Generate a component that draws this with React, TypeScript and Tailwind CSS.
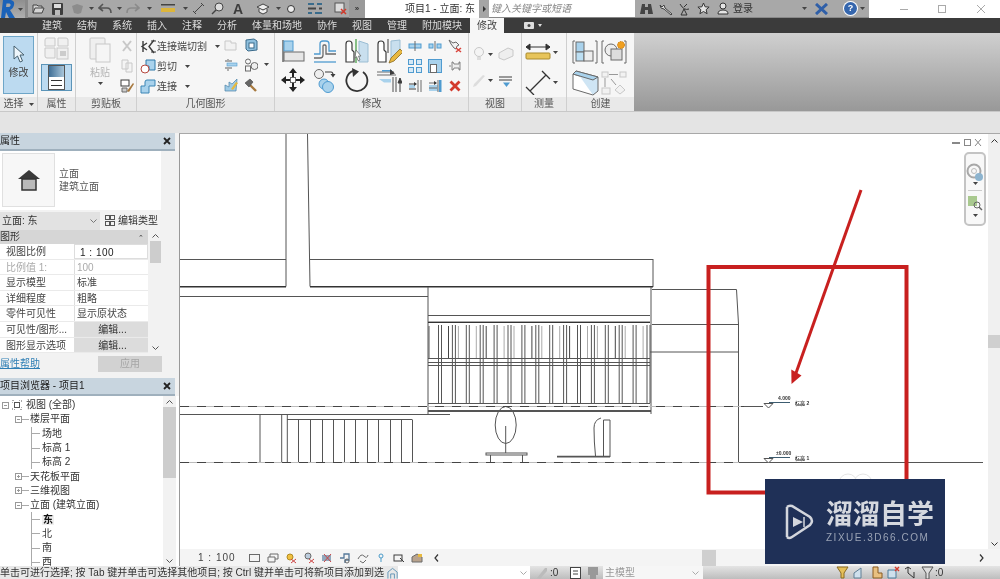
import type { ReactNode } from 'react';

const B = '#4f9bd0';
const LB = '#a9d2ec';
const G = '#6a6a6a';
const D = '#3c3c3c';
const F = '#c8c8c8';

function I({ w = 16, h = 16, children }: { w?: number; h?: number; children: ReactNode }) {
  return (
    <svg width={w} height={h} viewBox={`0 0 ${w} ${h}`} fill="none" className="shrink-0">
      {children}
    </svg>
  );
}

const Caret = () => (
  <svg width="5" height="3" viewBox="0 0 5 3" className="shrink-0">
    <path d="M0 0h5L2.500 3z" fill="#444" />
  </svg>
);

function Tb({ className = '', children }: { className?: string; children: ReactNode }) {
  return <span className={`flex w-[16px] shrink-0 items-center justify-center ${className}`}>{children}</span>;
}

/* ribbon: modify panel big icons */
const IcAlign = () => (
  <I w={26} h={26}>
    <path d="M3 2v22" stroke={G} strokeWidth="1.500" />
    <rect x="4" y="3" width="9" height="10" fill={LB} stroke={B} />
    <rect x="4" y="14" width="20" height="9" fill="#e6e6e6" stroke={G} />
  </I>
);
const IcOffset = () => (
  <I w={26} h={26}>
    <path d="M2 16h6V6q0-3 3-3h3q3 0 3 3v7h7" stroke={B} strokeWidth="1.300" />
    <path d="M2 20h6q3 0 3-3V8q0-1 1-1h1q1 0 1 1v8h10" stroke={G} strokeWidth="1.300" />
    <path d="M2 24h22" stroke={B} strokeWidth="1.300" />
  </I>
);
const Door = () => <path d="M2 24V6q0-3 3-3t3 3v6l2 2v10z" fill="#fff" stroke={D} strokeWidth="1.200" />;
const IcMirrorPick = () => (
  <I w={26} h={26}>
    <Door />
    <path d="M15 3l9 3v18h-9z" fill="#c9dfee" stroke="#9bbdd3" />
    <path d="M12 1v24" stroke="#58a858" strokeWidth="1.400" />
    <path d="M12 12l5 6-2.500 0 1.500 4-2 .6-1.400-4-1.600 1.600z" fill="#fff" stroke={G} strokeWidth=".8" />
  </I>
);
const IcMirrorDraw = () => (
  <I w={26} h={26}>
    <Door />
    <path d="M15 3l9-1v15l-9 6z" fill="#c9dfee" stroke="#9bbdd3" />
    <path d="M13 25l2-5 9-9 3 3-9 9z" fill="#e8b840" stroke="#8a6a20" strokeWidth=".8" />
    <path d="M12 1v14" stroke={D} />
  </I>
);
const IcMove = () => (
  <I w={26} h={26}>
    <path d="M13 1l4 5h-8zM13 25l-4-5h8zM1 13l5-4v8zM25 13l-5 4V9z" fill="#222" />
    <path d="M13 5v5M13 16v5M5 13h5M16 13h5" stroke="#222" strokeWidth="2" />
    <rect x="10.500" y="10.500" width="5" height="5" fill="#fff" stroke={G} />
  </I>
);
const IcCopy = () => (
  <I w={26} h={26}>
    <circle cx="7" cy="7" r="4.500" fill="#eee" stroke={G} />
    <path d="M13 5h6q2 0 2 3" stroke={D} strokeWidth="1.200" />
    <path d="M18.500 7h5L21 10.500z" fill={D} />
    <circle cx="12" cy="17" r="5" fill={LB} stroke={B} />
    <circle cx="16" cy="20" r="5.500" fill={LB} stroke={B} />
  </I>
);
const IcRotate = () => (
  <I w={26} h={26}>
    <path d="M9 3.800A10.500 10.500 0 1 0 19 5" stroke="#333" strokeWidth="1.800" />
    <path d="M8 1l7 3.500L9 10z" fill="#333" />
  </I>
);
const IcTrim = () => (
  <I w={26} h={26}>
    <path d="M1 5h17M1 8h19M17 10v15M20 10v15" stroke={G} strokeWidth="1.200" />
    <path d="M6 3h10v1.500H6z" fill={B} />
    <path d="M14 2l5 4.500-5 1.500z" fill={D} />
    <path d="M24 11l-2 5h4zM24 15v10" stroke={D} fill={D} />
    <path d="M3 12h12v3.500H8z" fill={LB} />
  </I>
);

/* ribbon: modify panel small icons */
const IcSplit = () => (
  <I w={14} h={14}>
    <rect x="1" y="5" width="12" height="4" fill={LB} stroke={B} />
    <path d="M7 2v10" stroke={G} />
  </I>
);
const IcSplitGap = () => (
  <I w={14} h={14}>
    <rect x="1" y="5" width="4" height="4" fill={LB} stroke={B} />
    <rect x="9" y="5" width="4" height="4" fill={LB} stroke={B} />
    <path d="M7 2v10" stroke={G} />
  </I>
);
const IcUnpin = () => (
  <I w={14} h={14}>
    <path d="M1 1l4 3 3-1 3 3-2 1-1 3-2-1-3-4z" fill="#f2f2f2" stroke={G} />
    <path d="M8 9l5 4M13 9l-5 4" stroke="#d9443c" strokeWidth="1.600" />
  </I>
);
const IcArray = () => (
  <I w={14} h={14}>
    {[0, 8].map((x) =>
      [0, 8].map((y) => (
        <rect key={`${x}${y}`} x={x + 0.5} y={y + 0.5} width="5" height="5" fill="#d6e9f6" stroke={B} />
      )),
    )}
  </I>
);
const IcScale = () => (
  <I w={14} h={14}>
    <rect x=".5" y=".5" width="13" height="13" fill={LB} stroke={B} />
    <rect x="2.500" y="5.500" width="6" height="8" fill="#fff" stroke={G} />
  </I>
);
const IcPin = () => (
  <I w={14} h={14}>
    <path d="M3 7H1M4 3h1l1 2h5V3h1v8h-1V9H6l-1 2H4z" fill="#eee" stroke={G} strokeWidth=".8" />
  </I>
);
const IcExt1 = () => (
  <I w={14} h={14}>
    <path d="M1 5h7M1 10h7" stroke={D} />
    <rect x="1" y="6" width="6" height="3" fill={LB} />
    <path d="M10 1v12M13 1v12" stroke={G} />
    <path d="M6 3l3 2-3 2z" fill={D} />
  </I>
);
const IcExt2 = () => (
  <I w={14} h={14}>
    <rect x="1" y="6" width="9" height="6" fill={LB} />
    <path d="M1 4h7M1 9h8" stroke={G} />
    <path d="M10 1v12" stroke={G} />
    <rect x="11" y="1" width="2.500" height="12" fill={B} />
    <path d="M6 2l3 2-3 2z" fill={D} />
  </I>
);
const IcDelete = () => (
  <I w={14} h={14}>
    <path d="M2.500 2.500l9 9M11.500 2.500l-9 9" stroke="#d33a2c" strokeWidth="2.800" />
  </I>
);

/* ribbon: geometry */
const IcCope = () => (
  <I w={16} h={15}>
    <path d="M3 2v11M7 4L2 7.500 7 11M14 1L9 7.500 14 14" stroke={D} strokeWidth="1.400" />
    <path d="M11 2l5 0M11 13l5 0" stroke={D} />
  </I>
);
const IcCut = () => (
  <I w={16} h={15}>
    <path d="M6 1h9v10H9V7H6z" fill={LB} stroke="#2f78a8" />
    <circle cx="5" cy="10" r="4" fill="#fff" stroke="#b5483f" />
  </I>
);
const IcJoin = () => (
  <I w={16} h={15}>
    <path d="M1 14V7h4V3q0-2 2-2h8v6H9v7z" fill={LB} stroke="#3a85b5" />
  </I>
);
const IcG1 = () => (
  <I w={14} h={14}>
    <path d="M1 3h6v2h5v7H1z" fill="#f2f2f2" stroke={F} />
  </I>
);
const IcG2 = () => (
  <I w={14} h={14}>
    <path d="M2 2l8-1 3 2v9l-9 1-2-2z" fill="#8fc0de" stroke="#3a6a8a" />
    <rect x="5" y="5" width="5" height="5" fill="#fff" stroke="#3a6a8a" />
  </I>
);
const IcG3 = () => (
  <I w={14} h={14}>
    <path d="M4 1v3M4 9v4" stroke={G} />
    <rect x="1" y="2" width="7" height="2" fill="#aaa" />
    <rect x="3" y="5" width="10" height="3" fill={LB} stroke={B} strokeWidth=".6" />
    <rect x="1" y="9" width="7" height="2" fill="#aaa" />
  </I>
);
const IcG4 = () => (
  <I w={14} h={14}>
    <circle cx="4" cy="3.500" r="2.500" stroke={G} />
    <rect x="1.500" y="8" width="5" height="5" stroke={G} />
    <circle cx="10.500" cy="8" r="3.500" fill="#eee" stroke={G} />
  </I>
);
const IcG5 = () => (
  <I w={14} h={14}>
    <path d="M1 13V7l4 2V4l3 2 5-5-1 12z" fill="#9fcbe6" stroke="#4a83a8" strokeWidth=".7" />
    <path d="M7 11l5-7 2 1-5 7z" fill="#e7b93f" />
  </I>
);
const IcHammer = () => (
  <I w={14} h={14}>
    <path d="M6 7l6 6" stroke="#a7793f" strokeWidth="2.400" />
    <path d="M1 5l5-4 3 3-4 5z" fill="#666" stroke="#444" strokeWidth=".6" />
  </I>
);

function Panel({
  width,
  title,
  caret,
  last,
  children,
}: {
  width: string;
  title: string;
  caret?: boolean;
  last?: boolean;
  children: ReactNode;
}) {
  return (
    <div className={`${width} flex shrink-0 flex-col ${last ? '' : 'border-r border-[#cfcfcf]'}`}>
      <div className="h-[64px] overflow-hidden">{children}</div>
      <div className="flex h-[14px] items-center justify-center gap-[5px] bg-[#e9e9e9] text-[#555]">
        {title}
        {caret && <Caret />}
      </div>
    </div>
  );
}

function Ribbon() {
  return (
    <div className="flex h-[78px] bg-[#f6f6f6]">
      {/* select */}
      <Panel width="w-[38px]" title="选择" caret>
        <div className="mx-[3px] mt-[3px] flex h-[58px] w-[31px] flex-col items-center border border-[#6ea6c8] bg-[#bcdaf0] pt-[8px]">
          <svg width="14" height="18" viewBox="0 0 14 18" fill="none">
            <path d="M2 1v13l3.500-3 2.500 6 2.500-1-2.500-6H12z" fill="#eef6fb" stroke="#46606f" />
          </svg>
          <span className="mt-[5px]">修改</span>
        </div>
      </Panel>
      {/* properties */}
      <Panel width="w-[38px]" title="属性">
        <div className="flex flex-col items-center pt-[3px]">
          <I w={26} h={26}>
            <g stroke={F} fill="#f0f0f0">
              <path d="M1 4q0-2 2-2h8v8H1zM14 2h8q2 0 2 2v6H14zM1 12h10v10H3q-2 0-2-2z" />
              <rect x="13" y="12" width="11" height="11" />
            </g>
            <rect x="16" y="15" width="6" height="5" fill="#ccc" />
          </I>
          <div className="mt-[2px] flex h-[27px] w-[31px] items-center justify-center border border-[#5b94b8] bg-[#bcdaf0]">
            <div className="h-[25px] w-[17px] border border-[#555] bg-white">
              <div className="h-[11px] bg-gradient-to-r from-[#3f6f96] to-[#a9c6da]" />
              <div className="mx-[2px] mt-[3px] h-px bg-[#333]" />
              <div className="mx-[2px] mt-[4px] h-px bg-[#333]" />
            </div>
          </div>
        </div>
      </Panel>
      {/* clipboard */}
      <Panel width="w-[61px]" title="剪贴板">
        <div className="flex pt-[4px] text-[#b5b5b5]">
          <div className="flex w-[44px] flex-col items-center pl-[4px]">
            <I w={24} h={26}>
              <rect x="2" y="1" width="15" height="21" rx="1" fill="#efefef" stroke={F} />
              <rect x="8" y="7" width="14" height="18" fill="#f5f5f5" stroke={F} />
            </I>
            <span className="mt-[4px] leading-[12px]">粘贴</span>
            <span className="mt-[3px]">
              <Caret />
            </span>
          </div>
          <div className="flex flex-col items-center gap-[6px] pt-[2px]">
            <I w={14} h={14}>
              <path d="M3 2l8 10M11 2L3 12" stroke={F} strokeWidth="2" />
            </I>
            <I w={14} h={14}>
              <path d="M2 1h6v9H2zM6 4h6v9H6z" fill="#f4f4f4" stroke={F} />
            </I>
            <I w={14} h={14}>
              <rect x="1" y="1" width="8" height="6" fill="#fff" stroke={D} />
              <path d="M2 9h5v4H2z" fill="#ccc" stroke={G} />
              <path d="M7 12l6-8 1 1-5 8z" fill="#a7793f" />
            </I>
          </div>
        </div>
      </Panel>
      {/* geometry */}
      <Panel width="w-[138px]" title="几何图形">
        <div className="flex pt-[5px]">
          <div className="flex w-[87px] flex-col gap-[3px] pl-[3px]">
            {[
              { label: '连接端切割', icon: <IcCope /> },
              { label: '剪切', icon: <IcCut /> },
              { label: '连接', icon: <IcJoin /> },
            ].map((r) => (
              <div key={r.label} className="flex h-[17px] items-center gap-[1px]">
                {r.icon}
                <span className="whitespace-nowrap">{r.label}</span>
                <span className="ml-[7px]">
                  <Caret />
                </span>
              </div>
            ))}
          </div>
          <div className="grid grid-cols-[20px_20px_6px] grid-rows-[20px_20px_20px] items-start">
            <IcG1 />
            <IcG2 />
            <span />
            <IcG3 />
            <IcG4 />
            <span className="pt-[5px]">
              <Caret />
            </span>
            <IcG5 />
            <IcHammer />
            <span />
          </div>
        </div>
      </Panel>
      {/* modify */}
      <Panel width="w-[194px]" title="修改">
        <div className="flex pt-[3px] pl-[2px]">
          <div className="grid w-[128px] grid-cols-4 grid-rows-[29px_29px] place-items-center">
            <IcAlign />
            <IcOffset />
            <IcMirrorPick />
            <IcMirrorDraw />
            <IcMove />
            <IcCopy />
            <IcRotate />
            <IcTrim />
          </div>
          <div className="grid w-[60px] grid-cols-3 grid-rows-[20px_20px_20px] place-items-center">
            <IcSplit />
            <IcSplitGap />
            <IcUnpin />
            <IcArray />
            <IcScale />
            <IcPin />
            <IcExt1 />
            <IcExt2 />
            <IcDelete />
          </div>
        </div>
      </Panel>
      {/* view */}
      <Panel width="w-[53px]" title="视图">
        <div className="grid grid-cols-[16px_10px_16px] grid-rows-[28px_25px] items-center pl-[3px] pt-[7px]">
          <I w={14} h={16}>
            <circle cx="7" cy="6" r="4.500" fill="#f4f4f4" stroke={F} />
            <path d="M5 11h4v3H5z" fill="#ddd" />
          </I>
          <Caret />
          <I w={16} h={14}>
            <path d="M1 6l9-5 5 2v6l-9 4-5-2z" fill="#eee" stroke={F} />
          </I>
          <I w={14} h={14}>
            <path d="M1 13l3-1 9-10-2-1-9 9z" fill="#ddd" />
          </I>
          <Caret />
          <I w={16} h={14}>
            <path d="M1 3h13M1 6h13" stroke={D} />
            <path d="M5 8.500h7L8.500 13z" fill={B} />
          </I>
        </div>
      </Panel>
      {/* measure */}
      <Panel width="w-[45px]" title="测量">
        <div className="grid grid-cols-[28px_6px] grid-rows-[32px_28px] items-center pl-[3px] pt-[3px]">
          <I w={26} h={22}>
            <path d="M1 6h24M1 6l4-3v6zM25 6l-4-3v6z" stroke="#333" fill="#333" />
            <rect x="1" y="12" width="24" height="6" rx="1" fill="#e7c45a" stroke="#a98a2c" />
          </I>
          <Caret />
          <I w={26} h={26}>
            <path d="M5 22L21 6M1 18l8 8M17 2l8 8" stroke="#333" strokeWidth="1.300" />
          </I>
          <Caret />
        </div>
      </Panel>
      {/* create */}
      <Panel width="w-[67px]" title="创建" last>
        <div className="grid grid-cols-[30px_28px] grid-rows-[32px_30px] place-items-center pl-[3px] pt-[3px]">
          <I w={26} h={24}>
            <path d="M3 1H1v22h2M23 1h2v22h-2" stroke={G} />
            <rect x="4" y="2" width="8" height="10" fill={LB} stroke={G} />
            <rect x="4" y="12" width="8" height="9" fill="#bcdff3" stroke={G} />
            <rect x="12" y="11" width="9" height="10" fill="#eee" stroke={G} />
          </I>
          <I w={26} h={24}>
            <path d="M3 1H1v22h2M23 1h2v22h-2" stroke={G} />
            <circle cx="10" cy="10" r="6" fill="#eee" stroke={G} />
            <rect x="10" y="9" width="11" height="11" fill="#ddd" stroke={G} />
            <circle cx="20" cy="5" r="3.500" fill="#f0a020" stroke="#c97a10" strokeDasharray="1.500 1" />
          </I>
          <I w={27} h={26}>
            <path d="M1 4l20 6v15L1 19z" fill="#fff" stroke={G} />
            <path d="M4 1l22 6v14l-5 4" fill="#cfe5f4" stroke={G} />
            <path d="M1 4l3-3 22 6-5 3z" fill={LB} stroke={G} />
          </I>
          <I w={26} h={24}>
            <g stroke={F} fill="#f2f2f2">
              <rect x="1" y="1" width="6" height="5" />
              <rect x="19" y="1" width="6" height="5" />
              <rect x="1" y="17" width="8" height="6" />
              <path d="M19 14l5 5-5 4-5-4z" />
            </g>
            <path d="M8 3.500h9M4 7v9M10 8l5 6" stroke="#999" />
          </I>
        </div>
      </Panel>
      <div className="flex-1 border-b border-[#999] bg-gradient-to-b from-[#d0d0d0] to-[#999999]" />
    </div>
  );
}

const PROP_ROWS: [string, string, string?][] = [
  ['视图比例', '1 : 100', 'active'],
  ['比例值 1:', '100', 'muted'],
  ['显示模型', '标准'],
  ['详细程度', '粗略'],
  ['零件可见性', '显示原状态'],
  ['可见性/图形...', '编辑...', 'button'],
  ['图形显示选项', '编辑...', 'button'],
];

function PanelHeader({ title }: { title: string }) {
  return (
    <div className="flex h-[18px] w-[175px] shrink-0 items-center justify-between border-b-2 border-[#9fb0bd] bg-[#c8d5df] pr-[4px] text-[#222]">
      <span className="whitespace-nowrap">{title}</span>
      <svg width="8" height="8" viewBox="0 0 8 8">
        <path d="M1 1l6 6M7 1L1 7" stroke="#222" strokeWidth="1.800" />
      </svg>
    </div>
  );
}

function Properties() {
  return (
    <div className="flex h-[242px] flex-col">
      <PanelHeader title="属性" />
      <div className="flex h-[59px] w-[161px] shrink-0 bg-white pt-[2px] pl-[2px]">
        <div className="flex h-[54px] w-[53px] items-center justify-center border border-[#e0e0e0] bg-[#f7f7f7]">
          <svg width="24" height="22" viewBox="0 0 24 22">
            <path d="M12 1L1 10h22z" fill="#3a3a3a" />
            <rect x="5" y="10" width="14" height="11" fill="#b9b9b9" stroke="#333" strokeWidth="1.500" />
          </svg>
        </div>
        <div className="ml-[4px] pt-[14px] leading-[13px] text-[#555]">
          <div>立面</div>
          <div>建筑立面</div>
        </div>
      </div>
      <div className="flex h-[20px] shrink-0 items-center pt-[1px]">
        <div className="flex h-[18px] w-[100px] items-center justify-between bg-[#e2e2e2] pl-[2px] pr-[3px] text-[#333]">
          立面: 东
          <svg width="7" height="4" viewBox="0 0 7 4" fill="none">
            <path d="M.5.500l3 3 3-3" stroke="#777" />
          </svg>
        </div>
        <div className="ml-[5px] flex items-center gap-[3px] text-[#333]">
          <svg width="10" height="11" viewBox="0 0 10 11" fill="none" stroke="#555">
            <rect x=".5" y=".5" width="4" height="4" />
            <rect x="5.500" y=".5" width="4" height="4" />
            <rect x=".5" y="6.500" width="4" height="4" />
            <rect x="5.500" y="6.500" width="4" height="4" />
          </svg>
          <span className="whitespace-nowrap">编辑类型</span>
        </div>
      </div>
      <div className="flex shrink-0">
        <div className="w-[148px]">
          <div className="flex h-[14px] items-center justify-between bg-[#d6d6d6] pr-[4px] text-[#333]">
            图形
            <span className="text-[7px] leading-none">⌃</span>
          </div>
          {PROP_ROWS.map(([k, v, kind]) => (
            <div key={k} className="flex h-[15.600px] border-b border-[#eaeaea] bg-white">
              <div className={`w-[74px] whitespace-nowrap pl-[6px] leading-[15px] ${kind === 'muted' ? 'text-[#aaa]' : 'text-[#444]'}`}>
                {k}
              </div>
              <div
                className={`flex-1 whitespace-nowrap border-l border-[#ddd] pl-[2px] leading-[15px] ${
                  kind === 'active'
                    ? 'border border-[#444] pl-[5px] tracking-[0.5px] text-[#222]'
                    : kind === 'muted'
                      ? 'text-[#aaa]'
                      : kind === 'button'
                        ? 'border-b border-[#aaa] bg-[#dcdcdc] pl-[0px] text-center text-[#333]'
                        : 'text-[#444]'
                }`}
              >
                {v}
              </div>
            </div>
          ))}
        </div>
        <div className="ml-[2px] flex h-[123px] w-[11px] flex-col items-center bg-[#f2f2f2]">
          <svg className="mt-[4px]" width="7" height="4" viewBox="0 0 7 4" fill="none">
            <path d="M.5 3.500l3-3 3 3" stroke="#555" />
          </svg>
          <div className="mt-[3px] h-[22px] w-full bg-[#cdcdcd]" />
          <svg className="mt-auto mb-[3px]" width="7" height="4" viewBox="0 0 7 4" fill="none">
            <path d="M.5.500l3 3 3-3" stroke="#555" />
          </svg>
        </div>
      </div>
      <div className="flex items-center justify-between pt-[3px] pr-[17px]">
        <span className="text-[#2f7fb5] underline">属性帮助</span>
        <div className="flex h-[16px] w-[64px] items-center justify-center bg-[#d2d2d2] text-[#a5a5a5]">应用</div>
      </div>
    </div>
  );
}

const TREE = [
  { label: '视图 (全部)', level: 0 },
  { label: '楼层平面', level: 1, box: '−' },
  { label: '场地', level: 2 },
  { label: '标高 1', level: 2 },
  { label: '标高 2', level: 2 },
  { label: '天花板平面', level: 1, box: '+' },
  { label: '三维视图', level: 1, box: '+' },
  { label: '立面 (建筑立面)', level: 1, box: '−' },
  { label: '东', level: 2, bold: true },
  { label: '北', level: 2 },
  { label: '南', level: 2 },
  { label: '西', level: 2 },
];

function TreeBox({ sign }: { sign: string }) {
  return (
    <svg width="7" height="7" viewBox="0 0 7 7" className="shrink-0" fill="none" stroke="#999">
      <rect x=".5" y=".5" width="6" height="6" />
      <path d="M2 3.500h3" />
      {sign === '+' && <path d="M3.500 2v3" />}
    </svg>
  );
}

function Browser() {
  return (
    <div className="mt-[3px] flex h-[188px] flex-col overflow-hidden">
      <PanelHeader title="项目浏览器 - 项目1" />
      <div className="flex min-h-0 flex-1 bg-white">
        <div className="w-[163px] pt-[2px] text-[#333]">
          {TREE.map((t) => (
            <div key={t.label} className="flex h-[14.300px] items-center whitespace-nowrap">
              {t.level === 0 && (
                <>
                  <span className="ml-[2px]">
                    <TreeBox sign="−" />
                  </span>
                  <svg className="ml-[3px] mr-[4px]" width="10" height="10" viewBox="0 0 10 10" fill="none" stroke="#555">
                    <rect x="2.500" y="2.500" width="5" height="5" />
                    <path d="M0 3V0h3M7 0h3v3M10 7v3H7M3 10H0V7" strokeDasharray="1 1" />
                  </svg>
                </>
              )}
              {t.level === 1 && (
                <>
                  <span className="ml-[15px]">
                    <TreeBox sign={t.box as string} />
                  </span>
                  <span className="mr-[1px] h-px w-[7px] bg-[#aaa]" />
                </>
              )}
              {t.level === 2 && (
                <>
                  <span className="ml-[31px] flex h-full w-[9px] items-center border-l border-[#aaa]">
                    <span className="h-px w-full bg-[#aaa]" />
                  </span>
                  <span className={`ml-[2px] ${t.bold ? 'bg-[#eeeeee] px-[1px] font-bold text-[#111]' : ''}`}>{t.label}</span>
                </>
              )}
              {t.level !== 2 && t.label}
            </div>
          ))}
        </div>
        <div className="flex w-[13px] flex-col items-center bg-[#f2f2f2]">
          <svg className="mt-[4px]" width="7" height="4" viewBox="0 0 7 4" fill="none">
            <path d="M.5 3.500l3-3 3 3" stroke="#555" />
          </svg>
          <div className="mt-[3px] h-[71px] w-full bg-[#cdcdcd]" />
          <svg className="mt-auto mb-[3px]" width="7" height="4" viewBox="0 0 7 4" fill="none">
            <path d="M.5.500l3 3 3-3" stroke="#555" />
          </svg>
        </div>
      </div>
    </div>
  );
}

const COLS = Array.from({ length: 16 }, (_, i) => 438.5 + i * 13.9);
const LOWER = [298, 310, 322, 333, 344, 355, 367, 378, 390, 401, 412];

function Elevation() {
  return (
    <svg className="block h-[416px] w-full" viewBox="180 133 808 416" fill="none" stroke="#555" strokeWidth="1">
      {/* upper volume */}
      <path d="M286 133v152.500M307.500 133l2.500 152.500M180 258.500h106M310 258.500h343M653 258v28" />
      <path d="M180 285.700h106M310 285.700h343" stroke="#333" strokeWidth="1.500" />
      <path d="M180 295.500h248M428 286v127M180 413.500h270" />
      {/* curtain wall */}
      <path d="M428 314.500h222M428 321h222" />
      <path d="M428 321.500h222" stroke="#333" />
      <path d="M651 286v127" />
      <path d="M428 357.500h222M428 361.500h222M428 364.500h222M428 402.500h222" />
      <path d="M428 410h223" strokeWidth="2" />
      {COLS.map((x, i) => (
        <g key={x}>
          <path d={`M${x} 324v78M${x + 3} 324v78`} />
          {i < 15 && <path d={`M${x + (i % 2 ? 6 : 10)} 325v32`} stroke={i % 3 ? '#aaa' : '#444'} />}
        </g>
      ))}
      <path d="M429 325v32" />
      {/* lower volume */}
      <path d="M260 413.500V461M281.700 413.500V461M287.300 413.500V461M287 418.500h125" />
      {LOWER.map((x) => (
        <path key={x} d={`M${x}.5 418.500V461`} />
      ))}
      {/* tree + bench */}
      <ellipse cx="505.700" cy="424" rx="10.500" ry="18.500" />
      <path d="M505.700 425v27M490.500 454v7M522.500 454v7" />
      <rect x="486" y="452" width="41" height="2" />
      {/* chair */}
      <path d="M557 455.700h53" strokeWidth="1.800" />
      <path d="M603.500 456v-37h6.500v37M601 417q-7 2-7 10 0 14 1.500 28" />
      {/* right wing */}
      <path d="M652 288.500h84.500l2 34.500v138M652 323.500h86.500M650 351h89" />
      {/* levels */}
      <path d="M180 405.500h583M180 461.500h559" stroke="#bbb" />
      <path d="M180 405.500h583M180 461.500h559" stroke="#444" strokeDasharray="9 8" />
      <path d="M739 461.500h244M744 405.500h19" />
      <path d="M764 402.500h9l-4.500 4.500zM764 457.500h9l-4.500 4.500z" fill="#fff" />
      <path d="M769 401.500h21M769 456.500h21" stroke="#3c5c70" />
      <text x="778" y="399" fontSize="5" fontWeight="bold" fill="#333" stroke="none">4.000</text>
      <text x="795" y="404" fontSize="5" fontWeight="bold" fill="#333" stroke="none">标高 2</text>
      <text x="776" y="454" fontSize="5" fontWeight="bold" fill="#333" stroke="none">±0.000</text>
      <text x="795" y="459" fontSize="5" fontWeight="bold" fill="#333" stroke="none">标高 1</text>
      {/* faint shapes behind watermark */}
      <circle cx="848" cy="482" r="9" stroke="#e5e5e5" />
      <circle cx="863" cy="482" r="9" stroke="#e5e5e5" />
      {/* annotation */}
      <rect x="708.500" y="266" width="198" height="225.500" stroke="#c8201f" strokeWidth="4" />
      <path d="M861 189L796 372" stroke="#c8201f" strokeWidth="3" />
      <path d="M791.500 383L791.300 368.500L801.500 374.500z" fill="#c81f1f" stroke="none" />
    </svg>
  );
}

function ViewBar() {
  const s = { w: 12, h: 12 };
  return (
    <div className="flex h-[17px] items-center bg-[#f4f4f4] text-[#444]">
      <span className="ml-[18px] w-[51px] whitespace-nowrap tracking-[1px]">1 : 100</span>
      <div className="flex items-center gap-[6px]">
        <I {...s}>
          <rect x=".5" y="2.500" width="10" height="7" stroke={G} />
        </I>
        <I {...s}>
          <path d="M1 5h7v5H1zM3 5V2h8v5H8" stroke={G} />
        </I>
        <I {...s}>
          <circle cx="5" cy="5" r="3" fill="#f0c040" stroke="#b08a20" />
          <path d="M6 7l5 4M11 7l-5 4" stroke="#c44" />
        </I>
        <I {...s}>
          <circle cx="5" cy="4" r="3" fill="#bcd" stroke={G} />
          <path d="M6 7l5 4M11 7l-5 4" stroke="#c44" />
        </I>
        <I {...s}>
          <rect x="1" y="3" width="9" height="6" fill="#8fa8bd" />
          <path d="M3 2l7 8M10 2l-7 8" stroke="#c44" />
        </I>
        <I {...s}>
          <path d="M1 6h4V2h5v6H6v3" stroke="#56799a" strokeWidth="1.300" />
          <circle cx="8" cy="9" r="2" stroke={G} />
        </I>
        <I {...s}>
          <path d="M1 7q3-6 6-3t4-1M3 9l3 2 3-3" stroke={G} />
        </I>
        <I {...s}>
          <circle cx="6" cy="4" r="2" stroke="#4a9bc9" />
          <path d="M6 6v4" stroke="#4a9bc9" />
        </I>
        <I {...s}>
          <rect x="1" y="3" width="8" height="6" stroke={D} />
          <path d="M7 6l4 4" stroke={D} />
        </I>
        <I {...s}>
          <path d="M1 10V5l5-3 5 3v5z" fill="#b9a38d" stroke={G} />
          <rect x="7" y="2" width="4" height="3" fill="#e7b93f" />
        </I>
      </div>
      <svg className="ml-[11px]" width="5" height="8" viewBox="0 0 5 8" fill="none">
        <path d="M4 .500L1 4l3 3.500" stroke="#333" strokeWidth="1.200" />
      </svg>
      <div className="ml-[263px] h-[16px] w-[14px] bg-[#cfcfcf]" />
      <svg className="ml-[263px]" width="5" height="8" viewBox="0 0 5 8" fill="none">
        <path d="M1 .500L4 4 1 7.500" stroke="#333" strokeWidth="1.200" />
      </svg>
    </div>
  );
}

function Canvas() {
  return (
    <div className="relative flex h-[433px] min-w-0 flex-1 flex-col border-t border-l border-t-[#a8a8a8] border-l-[#999]">
      <div className="flex min-h-0 flex-1 bg-white">
        <div className="min-w-0 flex-1">
          <Elevation />
        </div>
        <div className="flex w-[12px] flex-col items-center bg-[#f0f0f0]">
          <svg className="mt-[5px]" width="7" height="4" viewBox="0 0 7 4" fill="none">
            <path d="M.5 3.500l3-3 3 3" stroke="#333" />
          </svg>
          <div className="mt-[192px] h-[13px] w-full bg-[#cfcfcf]" />
          <svg className="mt-auto mb-[3px]" width="7" height="4" viewBox="0 0 7 4" fill="none">
            <path d="M.5.500l3 3 3-3" stroke="#333" />
          </svg>
        </div>
      </div>
      <ViewBar />
      {/* view cube controls */}
      <div className="absolute right-[17px] top-[4px] flex items-center gap-[3px]">
        <svg width="32" height="9" viewBox="0 0 32 9" fill="none" stroke="#888">
          <path d="M1 5h8" strokeWidth="2" />
          <rect x="13.500" y="1.500" width="6" height="6" />
          <path d="M24 1l6 7M30 1l-6 7" />
        </svg>
      </div>
      {/* nav bar */}
      <div className="absolute right-[14px] top-[18px] flex h-[74px] w-[22px] flex-col items-center rounded-[5px] border-2 border-[#c4c4c4] bg-[#f8f8f8]">
        <svg className="mt-[8px]" width="18" height="20" viewBox="0 0 18 20" fill="none">
          <circle cx="8" cy="9" r="6.500" stroke="#a8a8a8" strokeWidth="2" />
          <circle cx="8" cy="9" r="2.500" stroke="#bbb" />
          <circle cx="13" cy="15" r="4" fill="#8db4cf" />
        </svg>
        <Caret />
        <div className="mt-[5px] h-px w-[14px] bg-[#ccc]" />
        <svg className="mt-[4px]" width="16" height="16" viewBox="0 0 16 16" fill="none">
          <rect x="1" y="1" width="9" height="10" fill="#a9c98f" />
          <circle cx="10" cy="10" r="3" stroke="#666" />
          <path d="M12 12l3 3" stroke="#666" strokeWidth="1.500" />
        </svg>
        <span className="mt-[3px]">
          <Caret />
        </span>
      </div>
    </div>
  );
}

function TitleBar() {
  return (
    <div className="flex h-[18px] text-[#333]">
      {/* app button */}
      <div className="flex h-full w-[25px] items-center justify-between bg-gradient-to-b from-[#8f8f8f] to-[#b0b0b0] pr-[2px]">
        <svg width="17" height="18" viewBox="0 0 17 18">
          <path d="M3 0h8q4 1 3 5t-4 5l5 8H9L6 12l-1 6H1z" fill="#1b62b8" />
          <path d="M6.500 3.500h3q1.500.5 1 2t-2 1.500H6z" fill="#a8a8a8" />
        </svg>
        <Caret />
      </div>
      <div className="w-[3px] bg-[#8a8a8a]" />
      {/* quick access */}
      <div className="flex h-full w-[321px] items-center border-b border-[#777] bg-[#a8a8a8] pl-[2px]">
        <Tb>
          <svg width="13" height="11" viewBox="0 0 13 11" fill="#d4d4d4" stroke="#444">
            <path d="M1 10V2h4l1 1h4v2M1 10l2-5h9l-2 5z" />
          </svg>
        </Tb>
        <Tb className="ml-[3px]">
          <svg width="11" height="12" viewBox="0 0 11 12">
            <rect width="11" height="12" rx="1" fill="#3e3e3e" />
            <rect x="2" y="1" width="7" height="4" fill="#ddd" />
            <rect x="3" y="7" width="5" height="5" fill="#bbb" />
          </svg>
        </Tb>
        <Tb className="ml-[4px]">
          <svg width="13" height="12" viewBox="0 0 13 12" fill="#8c8c8c">
            <path d="M1 3l5-2 6 2-2 7-3 1-4-1z" />
          </svg>
        </Tb>
        <span className="ml-[4px]">
          <Caret />
        </span>
        <Tb className="ml-[3px]">
          <svg width="14" height="11" viewBox="0 0 14 11" fill="none" stroke="#555" strokeWidth="1.600">
            <path d="M5 1L1 5l4 3M1 5h8q4 0 4 5" />
          </svg>
        </Tb>
        <span className="ml-[4px]">
          <Caret />
        </span>
        <Tb className="ml-[3px]">
          <svg width="14" height="11" viewBox="0 0 14 11" fill="none" stroke="#8a8a8a" strokeWidth="1.600">
            <path d="M9 1l4 4-4 3M13 5H5q-4 0-4 5" />
          </svg>
        </Tb>
        <span className="ml-[6px]">
          <Caret />
        </span>
        <Tb className="ml-[8px]">
          <svg width="14" height="11" viewBox="0 0 14 11">
            <rect y="1" width="14" height="1.500" fill="#444" />
            <rect y="5" width="14" height="4" fill="#dcb53c" />
          </svg>
        </Tb>
        <span className="ml-[7px]">
          <Caret />
        </span>
        <Tb className="ml-[2px]">
          <svg width="13" height="13" viewBox="0 0 13 13" fill="none" stroke="#444">
            <path d="M2 11l9-9M1 9l3 3M9 1l3 3" />
          </svg>
        </Tb>
        <Tb className="ml-[4px]">
          <svg width="14" height="13" viewBox="0 0 14 13" fill="none" stroke="#444">
            <circle cx="8" cy="5" r="4" fill="#ddd" />
            <path d="M5 8l-4 4" strokeWidth="1.500" />
          </svg>
        </Tb>
        <span className="ml-[4px] w-[16px] text-center text-[14px] font-bold leading-none text-[#3d3d3d]">A</span>
        <Tb className="ml-[9px]">
          <svg width="14" height="12" viewBox="0 0 14 12" fill="#eee" stroke="#444">
            <path d="M1 4l6-3 6 3-6 3zM3 6v3l4 2 4-2V6" />
          </svg>
        </Tb>
        <span className="ml-[5px]">
          <Caret />
        </span>
        <Tb className="ml-[2px]">
          <svg width="13" height="12" viewBox="0 0 13 12" fill="#eee" stroke="#333">
            <circle cx="6" cy="6" r="3.500" />
          </svg>
        </Tb>
        <Tb className="ml-[8px]">
          <svg width="14" height="13" viewBox="0 0 14 13" fill="none" strokeWidth="2">
            <path d="M0 2h6M9 2h5" stroke="#3a6c8c" />
            <path d="M0 6.500h8M11 6.500h3" stroke="#444" />
            <path d="M0 11h4M7 11h7" stroke="#3a6c8c" />
          </svg>
        </Tb>
        <Tb className="ml-[9px]">
          <svg width="13" height="13" viewBox="0 0 13 13" fill="none">
            <rect x="1" y="1" width="9" height="9" fill="#ddd" stroke="#555" />
            <path d="M7 7l5 5M12 7l-5 5" stroke="#d33a2c" strokeWidth="1.500" />
          </svg>
        </Tb>
      </div>
      <div className="flex w-[16px] items-center justify-center bg-[#9a9a9a] text-[8px] font-bold">»</div>
      {/* document title */}
      <div className="flex w-[114px] items-center justify-end bg-white pr-[4px]">
        <span className="whitespace-nowrap text-[10px]">项目1 - 立面: 东</span>
      </div>
      <div className="flex w-[10px] items-center justify-center bg-[#a5a5a5]">
        <svg width="3" height="6" viewBox="0 0 3 6">
          <path d="M0 0l3 3-3 3z" fill="#333" />
        </svg>
      </div>
      <div className="flex w-[146px] items-center border-b border-[#888] bg-white pl-[2px] text-[10px] italic text-[#888]">
        键入关键字或短语
      </div>
      {/* info center */}
      <div className="flex w-[234px] items-center border-b border-[#888] bg-[#a8a8a8] pl-[3px]">
        <svg className="ml-[2px]" width="13" height="12" viewBox="0 0 13 12" fill="#444">
          <path d="M2 1h3v3h3V1h3l2 10H8V7H5v4H0z" />
        </svg>
        <svg className="ml-[6px]" width="14" height="14" viewBox="0 0 14 14" fill="none" stroke="#444">
          <path d="M1 3l2 2 2-2 1 3 7 6-1 1-7-6-3-1z" fill="#ddd" />
        </svg>
        <svg className="ml-[5px]" width="12" height="14" viewBox="0 0 12 14" fill="none" stroke="#333">
          <path d="M2 2q4 7 9 5M6 5l3-3M3 13l3-6 3 6z" />
        </svg>
        <svg className="ml-[7px]" width="13" height="13" viewBox="0 0 13 13" fill="#e4e4e4" stroke="#333">
          <path d="M6.500 1l1.600 3.800 4 .3-3 2.600 1 4-3.600-2.200L2.900 11.700l1-4-3-2.600 4-.3z" />
        </svg>
        <svg className="ml-[7px]" width="12" height="13" viewBox="0 0 12 13" fill="#e4e4e4" stroke="#333">
          <circle cx="6" cy="4" r="3" />
          <path d="M1 12q0-4 5-4t5 4z" />
        </svg>
        <span className="ml-[4px] text-[10px]">登录</span>
        <span className="ml-[49px]">
          <Caret />
        </span>
        <svg className="ml-[8px]" width="13" height="12" viewBox="0 0 13 12" fill="none">
          <path d="M1 1l11 10M12 1L1 11" stroke="#2f5fa8" strokeWidth="3" />
        </svg>
        <span className="ml-[16px] flex h-[13px] w-[13px] items-center justify-center rounded-full bg-[#3566ad] text-[9px] font-bold leading-none text-white ring-1 ring-white">
          ?
        </span>
        <span className="ml-[3px]">
          <Caret />
        </span>
      </div>
      {/* window controls */}
      <div className="flex flex-1 items-center justify-around bg-white pl-[16px]">
        <svg width="10" height="10" viewBox="0 0 10 10" fill="none" stroke="#aaa">
          <path d="M1 5.500h8" />
        </svg>
        <svg width="10" height="10" viewBox="0 0 10 10" fill="none" stroke="#aaa">
          <rect x="1.500" y="1.500" width="7" height="7" />
        </svg>
        <svg width="10" height="10" viewBox="0 0 10 10" fill="none" stroke="#aaa">
          <path d="M1 1l8 8M9 1L1 9" />
        </svg>
      </div>
    </div>
  );
}

function TabBar() {
  const tabs = ['建筑', '结构', '系统', '插入', '注释', '分析', '体量和场地', '协作', '视图', '管理', '附加模块'];
  return (
    <div className="flex h-[15px] items-center gap-[15px] bg-[#3b3b3b] pl-[42px] text-[#dcdcdc]">
      {tabs.map((t) => (
        <span key={t} className="whitespace-nowrap">
          {t}
        </span>
      ))}
      <span className="-ml-[7px] flex h-full items-center bg-[#f6f6f6] px-[7px] text-[#444]">修改</span>
      <span className="ml-[5px] flex items-center gap-[4px]">
        <svg width="10" height="7" viewBox="0 0 10 7">
          <rect width="10" height="7" rx="1" fill="#ddd" />
          <circle cx="5" cy="3.500" r="1.500" fill="#444" />
        </svg>
        <svg width="4" height="3" viewBox="0 0 4 3">
          <path d="M0 0h4L2 3z" fill="#ddd" />
        </svg>
      </span>
    </div>
  );
}

function StatusBar() {
  return (
    <div className="flex h-[13px] items-center overflow-hidden bg-gradient-to-b from-[#e4e4e4] to-[#bdbdbd] text-[#333]">
      <div className="flex h-full w-[398px] items-center bg-[#e8e8e8]">
        <span className="whitespace-nowrap">单击可进行选择; 按 Tab 键并单击可选择其他项目; 按 Ctrl 键并单击可将新项目添加到选</span>
        <svg className="ml-[3px]" width="12" height="12" viewBox="0 0 12 12" fill="none" stroke="#5e93b5">
          <path d="M1 12V5l5-4 5 4v7M4 12V7h4v5" />
        </svg>
      </div>
      <div className="flex h-full w-[132px] items-center justify-end bg-white pr-[3px]">
        <svg width="7" height="4" viewBox="0 0 7 4" fill="none">
          <path d="M.5.500l3 3 3-3" stroke="#aaa" />
        </svg>
      </div>
      <svg className="ml-[6px]" width="12" height="12" viewBox="0 0 12 12">
        <path d="M1 11L9 1h2v3L4 12z" fill="#bbb" />
      </svg>
      <span className="ml-[2px] w-[17px] text-[10px]">:0</span>
      <svg className="ml-[3px]" width="11" height="12" viewBox="0 0 11 12" fill="#fff" stroke="#444">
        <rect x=".5" y=".5" width="10" height="11" />
        <path d="M3 4h5M3 7h5" />
      </svg>
      <svg className="ml-[7px]" width="10" height="12" viewBox="0 0 10 12" fill="#999">
        <rect width="10" height="8" />
        <path d="M2 8h6v4H2z" />
      </svg>
      <div className="ml-[5px] flex h-full w-[100px] items-center justify-between bg-[#f6f6f6] pl-[2px] pr-[4px] text-[#999]">
        主模型
        <svg width="7" height="4" viewBox="0 0 7 4" fill="none">
          <path d="M.5.500l3 3 3-3" stroke="#aaa" />
        </svg>
      </div>
      <div className="ml-[133px] flex items-center gap-[4px]">
        <svg width="13" height="13" viewBox="0 0 13 13" fill="#e5c05a" stroke="#8a6a20">
          <path d="M1 1h11L8 7v5H5V7z" />
        </svg>
        <svg width="13" height="13" viewBox="0 0 13 13" fill="#cfe0ec" stroke="#5e7e95">
          <path d="M1 7l7-5v10H1z" />
        </svg>
        <svg width="13" height="13" viewBox="0 0 13 13" fill="#e8c080" stroke="#8a5a20">
          <path d="M3 1h5v6h4v5H3z" />
        </svg>
        <svg width="13" height="13" viewBox="0 0 13 13" fill="none">
          <path d="M1 4h8v8H1z" fill="#cfe0ec" stroke="#4a7a9a" />
          <path d="M8 1l4 4M12 1L8 5" stroke="#d33a2c" strokeWidth="1.400" />
        </svg>
        <svg width="13" height="13" viewBox="0 0 13 13" fill="none" stroke="#333">
          <path d="M1 3l3-2 3 2M4 1v6l6 5V6" />
        </svg>
        <svg width="13" height="13" viewBox="0 0 13 13" fill="#ddd" stroke="#555">
          <path d="M1 1h11L8 7v6H5V7z" />
        </svg>
        <span className="-ml-[3px] text-[10px]">:0</span>
      </div>
    </div>
  );
}

export default function App() {
  return (
    <div className="relative flex h-[579px] w-[1000px] flex-col overflow-hidden bg-[#e6e6e6] font-['Liberation_Sans','Noto_Sans_CJK_SC',sans-serif] text-[10px] leading-none text-[#444] blur-[0.35px]">
      <TitleBar />
      <TabBar />
      <Ribbon />
      <div className="h-[22px] border-t border-[#c8c8c8] bg-[#e4e4e4]" />
      <div className="flex">
        <aside className="w-[179px] shrink-0 bg-[#f2f2f2]">
          <Properties />
          <Browser />
        </aside>
        <Canvas />
      </div>
      <StatusBar />
      {/* watermark */}
      <div className="absolute left-[765px] top-[479px] flex h-[85px] w-[180px] items-center bg-[#1f3057] pl-[14px]">
        <svg width="36" height="36" viewBox="0 0 36 36" fill="none" stroke="#d3d6dd" strokeWidth="2.500">
          <path d="M8 3v30M8 3q2-2 5-1l18 11q4 4 0 8L13 33q-3 2-5 0" />
          <path d="M14 13l10 5-10 5z" fill="#d3d6dd" stroke="none" />
          <path d="M25 13v10" strokeWidth="1.500" />
        </svg>
        <div className="ml-[11px] flex flex-col">
          <span className="whitespace-nowrap text-[27px] font-bold leading-[28px] text-[#d5d8df]">溜溜自学</span>
          <span className="mt-[4px] whitespace-nowrap text-[10px] leading-[10px] tracking-[1.500px] text-[#9aa3b5]">ZIXUE.3D66.COM</span>
        </div>
      </div>
    </div>
  );
}
